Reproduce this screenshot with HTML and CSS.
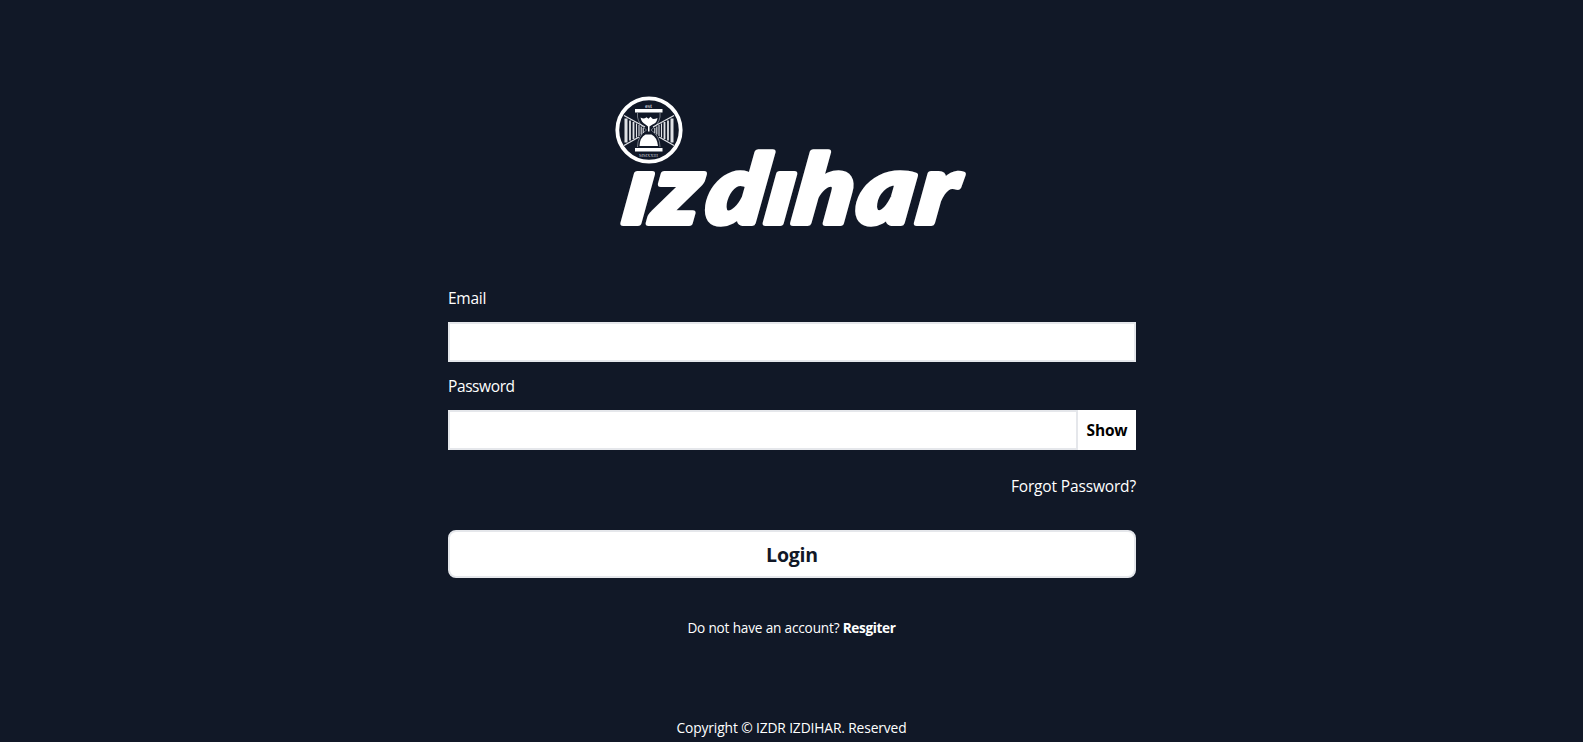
FILE: index.html
```html
<!DOCTYPE html>
<html lang="en">
<head>
<meta charset="utf-8">
<title>Login</title>
<link rel="stylesheet" href="styles.css">
</head>
<body>
<main class="page">
  <svg class="logo" viewBox="608 90 368 144" role="img" aria-label="izdihar">
    <circle cx="649" cy="130" r="31.7" fill="none" stroke="#fff" stroke-width="3.8"/>
    <text class="seal-text" x="648.5" y="107.500">est</text>
    <g fill="#fff">
      <path d="M635 109h27.500v3.500h-27.500zM635 148h27.500v3.500h-27.500z"/>
      <path d="M640.500 117.500q4 2 6-.2l2 1.500 2-2 2 2q2 .5 5-.8-.5 5-5 6.500l-3 2v5h-1.500v-5l-2.500-2q-4-2-5-7z"/>
      <path d="M639.500 146q.5-9 6-11.500h6q5.500 2.500 6.500 11.500z"/>
    </g>
    <g fill="none" stroke="#9ea3ac">
      <path stroke-width=".7" d="M637.500 113v4q1 7 9 13-9 6-9 17M660 113v4q-1 7-9 13 9 6 9 17"/>
    </g>
    <g fill="none" stroke="#dfe1e5">
      <path stroke-width="3" d="M626 118.500v24M672 118.500v24"/>
      <path stroke-width="1.800" d="M630 120.500v20M633.500 122v17M668 120.500v20M664.500 122v17"/>
      <path stroke-width="1.100" d="M636.500 123.500v14M639 125v11M641.200 126.500v8M643.200 128v5M661.500 123.500v14M659 125v11M656.800 126.500v8M654.800 128v5"/>
      <path stroke-width="1.300" d="M624 115.500l21 11.500M624 145.500l15-8.500M674 115.500l-21 11.500M674 145.500l-15-8.500"/>
    </g>
    <text class="seal-text seal-year" x="648.500" y="156.500">MMXXIII</text>
    <g transform="translate(608 222.500) skewX(-8) scale(1.12 1)">
      <text class="wordmark" x="12 38 86 139 164 220.500 274.500" y="0">ızdıhar</text>
    </g>
  </svg>
  <form class="form">
    <label class="label" for="email">Email</label>
    <input class="input" id="email" type="email">
    <label class="label label-password" for="password">Password</label>
    <div class="password-row">
      <input class="input" id="password" type="password">
      <button class="show" type="button">Show</button>
    </div>
    <a class="forgot">Forgot Password?</a>
    <button class="login" type="button">Login</button>
  </form>
  <p class="register">Do not have an account? <b>Resgiter</b></p>
  <footer class="copyright">Copyright © IZDR IZDIHAR. Reserved</footer>
</main>
</body>
</html>
```
FILE: styles.css
```css
* { box-sizing: border-box; }
body {
  margin: 0;
  background: #111827;
  color: #fff;
  font: 16px/24px "Open Sans", "Noto Sans", sans-serif;
}
.page {
  height: 742px;
  padding-top: 90px;
  display: flex;
  flex-direction: column;
  align-items: center;
}
.logo { width: 368px; height: 144px; flex: none; overflow: visible; }
.wordmark {
  font: italic 900 95px/1 Lato, sans-serif;
  fill: #fff;
  stroke: #fff;
  stroke-width: 6px;
  stroke-linejoin: round;
}
.seal-text {
  font: 700 6px "Liberation Serif", serif;
  fill: #b9bdc5;
  text-anchor: middle;
}
.seal-year { font-size: 4.5px; font-weight: 400; }
.form {
  width: 688px;
  margin-top: 52px;
  margin-right: -1px;
  display: flex;
  flex-direction: column;
}
.label { margin-bottom: 12px; font-size: 15.5px; letter-spacing: -0.25px; }
.label-password { letter-spacing: -0.4px; }
.input {
  width: 100%;
  height: 40px;
  margin: 0 0 12px;
  border: 2px solid #e5e7eb;
  background: #fff;
  font: inherit;
  outline: none;
}
.password-row { display: flex; height: 40px; }
.password-row .input { flex: 1; min-width: 0; }
.show {
  width: 58px;
  border: 0;
  padding: 0;
  background: #fff;
  color: #000;
  font: 700 15.5px/24px "Open Sans", sans-serif;
  letter-spacing: -0.15px;
}
.forgot { margin-top: 24px; text-align: right; font-size: 15.5px; letter-spacing: -0.15px; }
.login {
  height: 48px;
  margin-top: 32px;
  padding: 1px 0 0;
  border: 2px solid #e5e7eb;
  border-radius: 8px;
  background: #fff;
  color: #111827;
  font: 700 19.5px/28px "Open Sans", sans-serif;
  letter-spacing: -0.2px;
}
.register { margin: 40px 0 0; font-size: 13.6px; line-height: 20px; letter-spacing: -0.17px; }
.register b { letter-spacing: -0.35px; }
.copyright { margin-top: 80px; font-size: 13.8px; line-height: 20px; letter-spacing: -0.13px; }
```
